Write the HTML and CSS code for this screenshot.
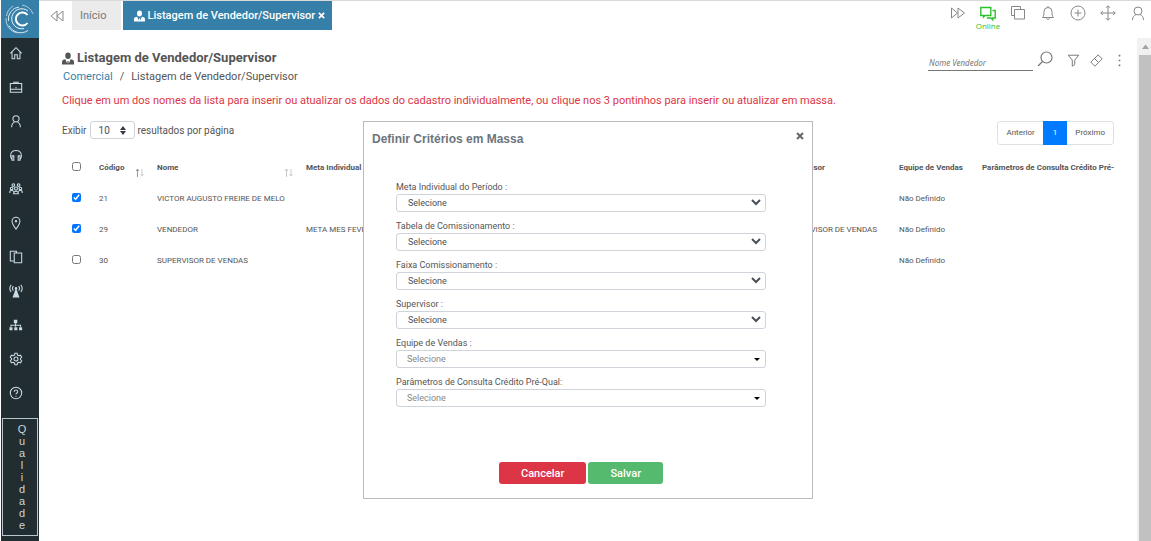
FILE: index.html
```
<!DOCTYPE html>
<html lang="pt-BR">
<head>
    <meta charset="UTF-8">
    <meta name="viewport" content="width=device-width, initial-scale=1.0">
    <title>Listagem de Vendedor/Supervisor</title>
    <link rel="stylesheet" href="styles.css">
</head>
<body>
    <!-- menu lateral -->
    <nav class="sidebar">
        <a href="#" class="logo" aria-label="Principal">
            <svg width="30" height="32" viewBox="0 0 30 30" fill="none" stroke="#fff">
                <path d="M22.500 11a6.500 6.500 0 1 0 0 8" stroke-width="2"/>
                <path d="M23 7A10 10 0 1 0 19 24.500" stroke-width="1" opacity=".9"/>
                <path d="M14 3A12 12 0 0 0 3.500 17M4 21.500A13 13 0 0 0 23 26.500" stroke-width="1" opacity=".8"/>
                <path d="M8 2A14 14 0 0 0 1.500 12M1 14A14 14 0 0 0 12 29M17 1A14 14 0 0 1 28 10" stroke-width="1" opacity=".6"/>
            </svg>
        </a>
        <a href="#" class="item" aria-label="Início"><svg viewBox="0 0 16 16"><path d="M1.500 8.500 8 2l6.500 6.500M3.500 7v7.500h3V10h3v4.500h3V7"/></svg></a>
        <a href="#" class="item" aria-label="Comercial"><svg viewBox="0 0 16 16"><path d="M1.500 4h13v10h-13zM1.500 10.500h13M5.500 4V2.500h5V4M8 8v1.500"/></svg></a>
        <a href="#" class="item" aria-label="Clientes"><svg viewBox="0 0 16 16"><circle cx="8" cy="5.500" r="3.500"/><path d="M3 15c0-3 1.500-5 3.500-6M13 15c0-3-1.500-5-3.500-6"/></svg></a>
        <a href="#" class="item" aria-label="Atendimento"><svg viewBox="0 0 16 16"><path d="M3.500 13.500C1.500 11 1.500 8.500 2 7c1.500-5.500 10.500-5.500 12 0 .5 1.500.5 4-1.500 6.500M3.500 9h2v5h-2zM10.500 9h2v5h-2z"/></svg></a>
        <a href="#" class="item" aria-label="Equipes"><svg viewBox="0 0 16 16"><circle cx="5" cy="3.500" r="1.500"/><circle cx="11" cy="3.500" r="1.500"/><circle cx="8" cy="7.500" r="1.800"/><circle cx="3" cy="7.500" r="1.500"/><circle cx="13" cy="7.500" r="1.500"/><path d="M.8 12.500c0-2 1-3 2.200-3s2 .8 2.200 1.500M15.200 12.500c0-2-1-3-2.200-3s-2 .8-2.200 1.500M5.200 13.500c0-4 5.600-4 5.600 0z"/></svg></a>
        <a href="#" class="item" aria-label="Mapa"><svg viewBox="0 0 16 16"><path d="M8 15C5 11 3.500 8.500 3.500 6a4.500 4.500 0 0 1 9 0C12.500 8.500 11 11 8 15z"/><circle cx="8" cy="6" r=".8"/></svg></a>
        <a href="#" class="item" aria-label="Documentos"><svg viewBox="0 0 16 16"><path d="M5.500 12.500h-4v-11h7v2M6 3.500h8.500v11H6z"/></svg></a>
        <a href="#" class="item" aria-label="Antena"><svg viewBox="0 0 16 16"><path d="M2.500 1c-2 2.500-2 5.500 0 8M5 2.500c-1.300 1.500-1.300 3.500 0 5M13.500 1c2 2.500 2 5.500 0 8M11 2.500c1.300 1.500 1.300 3.500 0 5"/><path class="solid" d="M8 4.500 12 15.500H4z"/><circle class="solid" cx="8" cy="5" r="1.500"/></svg></a>
        <a href="#" class="item" aria-label="Estrutura"><svg viewBox="0 0 16 16"><path class="solid" d="M5.500 2h4v4h-4zM.5 10.500H4V14H.5zM6 10.500h3.500V14H6zM11.500 10.500H15V14h-3.500z"/><path d="M7.500 6v4M2.200 10V8.200h11V10"/></svg></a>
        <a href="#" class="item" aria-label="Configurações"><svg viewBox="0 0 16 16"><circle cx="8" cy="8" r="2.300"/><path d="M6.700 1.500h2.600l.5 2 1.400.8 2-.6 1.300 2.300-1.400 1.400v1.200l1.400 1.400-1.300 2.300-2-.6-1.400.8-.5 2H6.700l-.5-2-1.400-.8-2 .6L1.500 10l1.400-1.400V7.400L1.500 6l1.300-2.300 2 .6 1.400-.8z"/></svg></a>
        <a href="#" class="item" aria-label="Ajuda"><svg viewBox="0 0 16 16"><circle cx="8" cy="8" r="6.500"/><path d="M6 6.500c0-2.500 4-2.500 4 0C10 8 8 8 8 9.500M8 11v1.200"/></svg></a>
        <a href="#" class="quality">Qualidade</a>
    </nav>

    <div class="main">
        <!-- barra superior -->
        <header class="topbar">
            <div class="tabs">
                <button class="tab-back" aria-label="Voltar abas"><svg width="14" height="12" viewBox="0 0 14 12"><path d="M7 1v10L1 6zM13 1v10L7 6z"/></svg></button>
                <a href="#" class="tab">Início</a>
                <a href="#" class="tab active">
                    <svg class="person" width="11" height="12" viewBox="0 0 14 14"><ellipse cx="7" cy="3.800" rx="3.200" ry="3.800"/><path d="M0 14v-3c0-2 1.500-2.800 4-3.200l2 5 .5-3h1l.5 3 2-5c2.500.4 4 1.200 4 3.200v3z"/></svg>
                    <span>Listagem de Vendedor/Supervisor</span>
                    <svg class="close-icon" width="7" height="7" viewBox="0 0 8 8"><path d="M1 1l6 6M7 1L1 7"/></svg>
                </a>
            </div>
            <div class="tools">
                <a href="#" aria-label="Avançar"><svg viewBox="0 0 16 16"><path d="M1.500 3v10l6-5zM8 3v10l6.500-5z"/></svg></a>
                <a href="#" class="online"><svg viewBox="0 0 16 16"><path d="M.8 2.500h10v8H5L3.500 12v-1.500H.8zM12.500 5.500h2.700v7.500h-2.500v1.800L11 13H7"/></svg><span>Online</span></a>
                <a href="#" aria-label="Janelas"><svg viewBox="0 0 16 16"><path d="M4 10.500H1.500v-9h9V4M4.500 4.500h10v9.500h-10z"/></svg></a>
                <a href="#" aria-label="Notificações"><svg viewBox="0 0 16 16"><path d="M2.500 12.500c1.500-1.500 1.500-3 1.500-6a4 4 0 0 1 8 0c0 3 0 4.500 1.500 6zM6.500 13c0 2 3 2 3 0M8 1v1.500"/></svg></a>
                <a href="#" aria-label="Adicionar"><svg viewBox="0 0 16 16"><circle cx="8" cy="8" r="7"/><path d="M8 4.500v7M4.500 8h7"/></svg></a>
                <a href="#" aria-label="Mover"><svg viewBox="0 0 16 16"><path d="M8 .8v14.400M.8 8h14.400M6 2.800l2-2 2 2M6 13.200l2 2 2-2M2.800 6l-2 2 2 2M13.200 6l2 2-2 2"/></svg></a>
                <a href="#" aria-label="Usuário"><svg viewBox="0 0 16 16"><circle cx="8" cy="6" r="4"/><path d="M2.500 15c0-3 1.500-4.500 3.500-5.500M13.500 15c0-3-1.500-4.500-3.500-5.500"/></svg></a>
            </div>
        </header>

        <div class="body">
            <main class="content">
                <div class="heading">
                    <div>
                        <h1><svg class="person" width="12" height="13" viewBox="0 0 14 14"><ellipse cx="7" cy="3.800" rx="3.200" ry="3.800"/><path d="M0 14v-3c0-2 1.500-2.800 4-3.200l2 5 .5-3h1l.5 3 2-5c2.500.4 4 1.200 4 3.200v3z"/></svg>Listagem de Vendedor/Supervisor</h1>
                        <div class="breadcrumb"><a href="#">Comercial</a><span>/</span><span>Listagem de Vendedor/Supervisor</span></div>
                    </div>
                    <form class="search">
                        <input type="text" placeholder="Nome Vendedor" aria-label="Nome Vendedor">
                        <button type="button" class="find" aria-label="Pesquisar"><svg width="16" height="16" viewBox="0 0 16 16"><circle cx="9.500" cy="6.500" r="5.500"/><path d="M5.500 10.500 1 15"/></svg></button>
                        <button type="button" aria-label="Filtrar"><svg width="13" height="13" viewBox="0 0 16 16"><path d="M1.500 1.500h13l-5 6V13l-3 2V7.500z"/></svg></button>
                        <button type="button" aria-label="Limpar"><svg width="13" height="13" viewBox="0 0 16 16"><path d="M1 10 10 1l5 5-9 9zM5.500 5.500l5 5"/></svg></button>
                        <button type="button" aria-label="Mais opções"><svg class="dots" width="13" height="13" viewBox="0 0 16 16"><path d="M7 1h2v2H7zM7 7h2v2H7zM7 13h2v2H7z"/></svg></button>
                    </form>
                </div>

                <p class="notice">Clique em um dos nomes da lista para inserir ou atualizar os dados do cadastro individualmente, ou clique nos 3 pontinhos para inserir ou atualizar em massa.</p>

                <div class="controls">
                    <div class="length">
                        <label for="length">Exibir</label>
                        <div class="select-box">
                            <select id="length"><option>10</option><option>25</option><option>50</option></select>
                            <svg width="6" height="9" viewBox="0 0 6 9"><path d="M3 0l3 4H0zM3 9l3-4H0z"/></svg>
                        </div>
                        <span>resultados por página</span>
                    </div>
                    <div class="pagination">
                        <a href="#">Anterior</a>
                        <a href="#" class="current">1</a>
                        <a href="#">Próximo</a>
                    </div>
                </div>

                <table>
                    <colgroup>
                        <col class="col-check"><col class="col-code"><col class="col-name"><col class="col-mid"><col class="col-mid"><col class="col-mid"><col class="col-sup"><col class="col-team"><col>
                    </colgroup>
                    <thead>
                        <tr>
                            <th><input type="checkbox" aria-label="Selecionar todos"></th>
                            <th><div class="sortable">Código<svg class="sorted" width="9" height="9" viewBox="0 0 9 9"><path class="up" d="M2.500 9V1M1 3l1.500-2L4 3"/><path d="M7 1v7M5.500 6 7 8l1.500-2"/></svg></div></th>
                            <th><div class="sortable">Nome<svg width="9" height="9" viewBox="0 0 9 9"><path d="M2.500 9V1M1 3l1.500-2L4 3M7 1v7M5.500 6 7 8l1.500-2"/></svg></div></th>
                            <th>Meta Individual do Período</th>
                            <th>Tabela de Comissionamento</th>
                            <th>Faixa Comissionamento</th>
                            <th>Supervisor</th>
                            <th>Equipe de Vendas</th>
                            <th>Parâmetros de Consulta Crédito Pré-</th>
                        </tr>
                    </thead>
                    <tbody>
                        <tr>
                            <td><input type="checkbox" checked aria-label="Selecionar 21"></td>
                            <td>21</td><td>VICTOR AUGUSTO FREIRE DE MELO</td><td></td><td></td><td></td><td></td><td>Não Definido</td><td></td>
                        </tr>
                        <tr>
                            <td><input type="checkbox" checked aria-label="Selecionar 29"></td>
                            <td>29</td><td>VENDEDOR</td><td>META MES FEVEREIRO</td><td></td><td></td><td>SUPERVISOR DE VENDAS</td><td>Não Definido</td><td></td>
                        </tr>
                        <tr>
                            <td><input type="checkbox" aria-label="Selecionar 30"></td>
                            <td>30</td><td>SUPERVISOR DE VENDAS</td><td></td><td></td><td></td><td></td><td>Não Definido</td><td></td>
                        </tr>
                    </tbody>
                </table>
            </main>
            <div class="scrollbar">
                <svg width="14" height="17" viewBox="0 0 14 17"><path d="M8.500 6.500 12 11H5z"/></svg>
                <div class="thumb"></div>
            </div>
        </div>

        <!-- janela de critérios em massa -->
        <div class="overlay">
            <form class="modal" role="dialog" aria-labelledby="modal-title">
                <div class="modal-header">
                    <h2 id="modal-title">Definir Critérios em Massa</h2>
                    <button type="button" class="modal-close" aria-label="Fechar"><svg class="close-icon" width="8" height="8" viewBox="0 0 8 8"><path d="M1 1l6 6M7 1L1 7"/></svg></button>
                </div>
                <div class="fields">
                    <label for="meta">Meta Individual do Período :</label>
                    <div class="select-box">
                        <select id="meta"><option>Selecione</option></select>
                        <svg class="chevron" width="10" height="7" viewBox="0 0 10 7"><path d="M1 1l4 4 4-4"/></svg>
                    </div>
                    <label for="tabela">Tabela de Comissionamento :</label>
                    <div class="select-box">
                        <select id="tabela"><option>Selecione</option></select>
                        <svg class="chevron" width="10" height="7" viewBox="0 0 10 7"><path d="M1 1l4 4 4-4"/></svg>
                    </div>
                    <label for="faixa">Faixa Comissionamento :</label>
                    <div class="select-box">
                        <select id="faixa"><option>Selecione</option></select>
                        <svg class="chevron" width="10" height="7" viewBox="0 0 10 7"><path d="M1 1l4 4 4-4"/></svg>
                    </div>
                    <label for="supervisor">Supervisor :</label>
                    <div class="select-box">
                        <select id="supervisor"><option>Selecione</option></select>
                        <svg class="chevron" width="10" height="7" viewBox="0 0 10 7"><path d="M1 1l4 4 4-4"/></svg>
                    </div>
                    <label for="equipe">Equipe de Vendas :</label>
                    <div class="select-box">
                        <select id="equipe" class="light"><option>Selecione</option></select>
                        <svg class="caret" width="6" height="3" viewBox="0 0 6 3"><path d="M0 0h6L3 3z"/></svg>
                    </div>
                    <label for="parametros">Parâmetros de Consulta Crédito Pré-Qual:</label>
                    <div class="select-box">
                        <select id="parametros" class="light"><option>Selecione</option></select>
                        <svg class="caret" width="6" height="3" viewBox="0 0 6 3"><path d="M0 0h6L3 3z"/></svg>
                    </div>
                </div>
                <div class="actions">
                    <button type="button" class="btn cancel">Cancelar</button>
                    <button type="button" class="btn save">Salvar</button>
                </div>
            </form>
        </div>
    </div>
</body>
</html>
```
FILE: styles.css
```
* {
    box-sizing: border-box;
}
body {
    margin: 0;
    min-height: 100vh;
    display: flex;
    overflow: hidden;
    font-family: Roboto, Arial, sans-serif;
    font-size: 9px;
    color: #555;
    background: #fff;
}
a {
    color: inherit;
    text-decoration: none;
}
button {
    padding: 0;
    border: 0;
    background: none;
    font-family: inherit;
    cursor: pointer;
}
svg {
    display: block;
    flex: none;
}

/* menu lateral */
.sidebar {
    flex: none;
    width: 39px;
    border-left: 1px solid #fff;
    background: #222d32;
}
.logo {
    display: flex;
    align-items: center;
    justify-content: center;
    height: 38px;
    margin-bottom: -2px;
    background: #367fa9;
}
.item {
    display: flex;
    align-items: center;
    height: 34px;
    padding-left: 8px;
}
.item svg {
    width: 14px;
    height: 14px;
    fill: none;
    stroke: #c9dbe3;
    stroke-width: 1.2;
}
.item .solid {
    fill: #c9dbe3;
    stroke: none;
}
.quality {
    display: flex;
    align-items: center;
    height: 118px;
    margin: 8px 2px 0 1px;
    padding: 4px 9px 0 13px;
    border: 1px solid #b8c7ce;
    color: #c9d5da;
    font: 11px "Liberation Sans", Arial, sans-serif;
    writing-mode: vertical-rl;
    text-orientation: upright;
}

/* barra superior */
.main {
    position: relative;
    flex: 1;
    min-width: 0;
    display: flex;
    flex-direction: column;
    border-top: 1px solid #d9d9d9;
}
.topbar {
    display: flex;
    justify-content: space-between;
    height: 37px;
}
.tabs {
    display: flex;
    gap: 2px;
    height: 29px;
}
.tab-back {
    width: 31px;
    padding-left: 11px;
}
.tab-back svg {
    fill: none;
    stroke: #888;
}
.tab {
    display: flex;
    align-items: center;
    gap: 3px;
    padding: 0 14px 0 8px;
    background: #ebebeb;
    color: #777;
    font-size: 11px;
}
.tab.active {
    padding: 0 7px 0 11px;
    background: #367fa9;
    color: #fff;
    font-weight: 500;
}
.person {
    fill: currentColor;
}
.close-icon {
    fill: none;
    stroke: currentColor;
    stroke-width: 2;
}
.tools {
    display: flex;
    gap: 4px;
    color: #888;
}
.tools a {
    display: flex;
    flex-direction: column;
    align-items: center;
    width: 26px;
    padding-top: 4px;
}
.tools svg {
    width: 16px;
    height: 16px;
    fill: none;
    stroke: currentColor;
}
.tools .online {
    color: #2dc22d;
}
.online span {
    font: 8px/10px "Open Sans", sans-serif;
}
.tools .online svg {
    stroke-width: 1.4;
}

/* conteúdo */
.body {
    flex: 1;
    display: flex;
}
.content {
    flex: 1;
    min-width: 0;
    padding: 11px 23px 0;
}
.heading {
    display: flex;
    justify-content: space-between;
}
h1 {
    display: flex;
    align-items: center;
    gap: 3px;
    margin: 0;
    font-size: 13px;
    font-weight: 700;
    line-height: 18px;
}
.breadcrumb {
    display: flex;
    gap: 7px;
    padding-left: 1px;
    font-size: 11px;
    line-height: 20px;
}
.breadcrumb a {
    color: #367fa9;
}
.search {
    display: flex;
    align-items: center;
    gap: 10px;
    height: 22px;
    margin-right: -12px;
}
.search input {
    width: 105px;
    height: 16px;
    margin-top: 6px;
    margin-right: -6px;
    padding: 0 1px;
    border: 0;
    border-bottom: 1px solid #777;
    font: italic 8px "Noto Sans", sans-serif;
}
.search input::placeholder {
    color: #777;
}
.search svg {
    fill: none;
    stroke: #777;
    stroke-width: 1.2;
}
.search .find {
    margin: 0 4px 2px 0;
}
.search .dots {
    fill: #777;
    stroke: none;
}
.notice {
    margin: 6px 0 12px;
    color: #dc3545;
    font-size: 11px;
    line-height: 16px;
}
.controls {
    display: flex;
    justify-content: space-between;
    align-items: flex-start;
}
.length {
    display: flex;
    align-items: center;
    gap: 3px;
    font-size: 10px;
}
.select-box {
    position: relative;
}
.select-box svg {
    position: absolute;
    top: 5px;
    right: 9px;
    pointer-events: none;
    fill: #343a40;
}
select {
    display: block;
    width: 100%;
    height: 18px;
    padding: 0 11px;
    border: 1px solid #ced4da;
    border-radius: 3px;
    background: #fff;
    color: #495057;
    font: 9px Roboto, Arial, sans-serif;
    appearance: none;
}
.length select {
    width: 45px;
    padding: 0 8px;
    font-size: 10px;
}
.pagination {
    display: flex;
    height: 24px;
    border: 1px solid #dee2e6;
    border-radius: 3px;
    font-size: 8px;
    line-height: 22px;
}
.pagination a {
    padding: 0 8px;
}
.pagination .current {
    margin: -1px 0;
    padding: 1px 10px;
    background: #007bff;
    color: #fff;
}
table {
    width: 100%;
    margin-top: 7px;
    table-layout: fixed;
    border-collapse: collapse;
    font-size: 8px;
}
th,
td {
    height: 31px;
    padding: 0;
    text-align: left;
    white-space: nowrap;
}
th {
    font-weight: 700;
}
table input {
    display: block;
    width: 9px;
    height: 9px;
    margin: 0 0 2px 10px;
}
.sortable {
    display: flex;
    justify-content: space-between;
    align-items: center;
    padding-right: 13px;
}
.sortable svg {
    margin: 5px 0 -5px;
    fill: none;
    stroke: #ccc;
    stroke-width: 1;
}
.sortable .up {
    stroke: #999;
}
.col-check {
    width: 37px;
}
.col-code {
    width: 58px;
}
.col-name {
    width: 149px;
}
.col-mid {
    width: 160px;
}
.col-sup {
    width: 113px;
}
.col-team {
    width: 83px;
}

.scrollbar {
    display: flex;
    flex-direction: column;
    flex: none;
    width: 14px;
    background: #f1f1f1;
}
.scrollbar svg {
    fill: #a3a3a3;
}
.thumb {
    flex: 1;
    margin-left: 2px;
    background: #c1c1c1;
}

/* modal */
.overlay {
    position: absolute;
    inset: 120px 14px 0 0;
    display: flex;
    justify-content: center;
    align-items: flex-start;
    pointer-events: none;
}
.modal {
    width: 450px;
    padding: 9px 8px 14px;
    border: 1px solid #bbb;
    background: #fff;
    pointer-events: auto;
}
.modal-header {
    display: flex;
    justify-content: space-between;
}
h2 {
    margin: 0;
    color: #6c757d;
    font: bold 12px/16px "Liberation Sans", Arial, sans-serif;
}
.modal-close {
    height: 10px;
    color: #666;
}
.fields {
    padding: 33px 38px 0 24px;
}
.fields label {
    display: block;
    line-height: 14px;
}
.fields .select-box {
    margin-bottom: 7px;
}
.fields .chevron {
    right: 5px;
    fill: none;
    stroke: #495057;
    stroke-width: 2;
}
.fields .caret {
    top: 8px;
    right: 6px;
    fill: #000;
}
select.light {
    padding: 0 10px;
    color: #888;
}
.actions {
    display: flex;
    justify-content: center;
    gap: 2px;
    margin-top: 55px;
    padding-right: 14px;
}
.btn {
    height: 22px;
    padding: 0 22px;
    border-radius: 3px;
    color: #fff;
    font-size: 11px;
    font-weight: 500;
}
.cancel {
    background: #dc3545;
}
.save {
    background: #55b96e;
}
```
